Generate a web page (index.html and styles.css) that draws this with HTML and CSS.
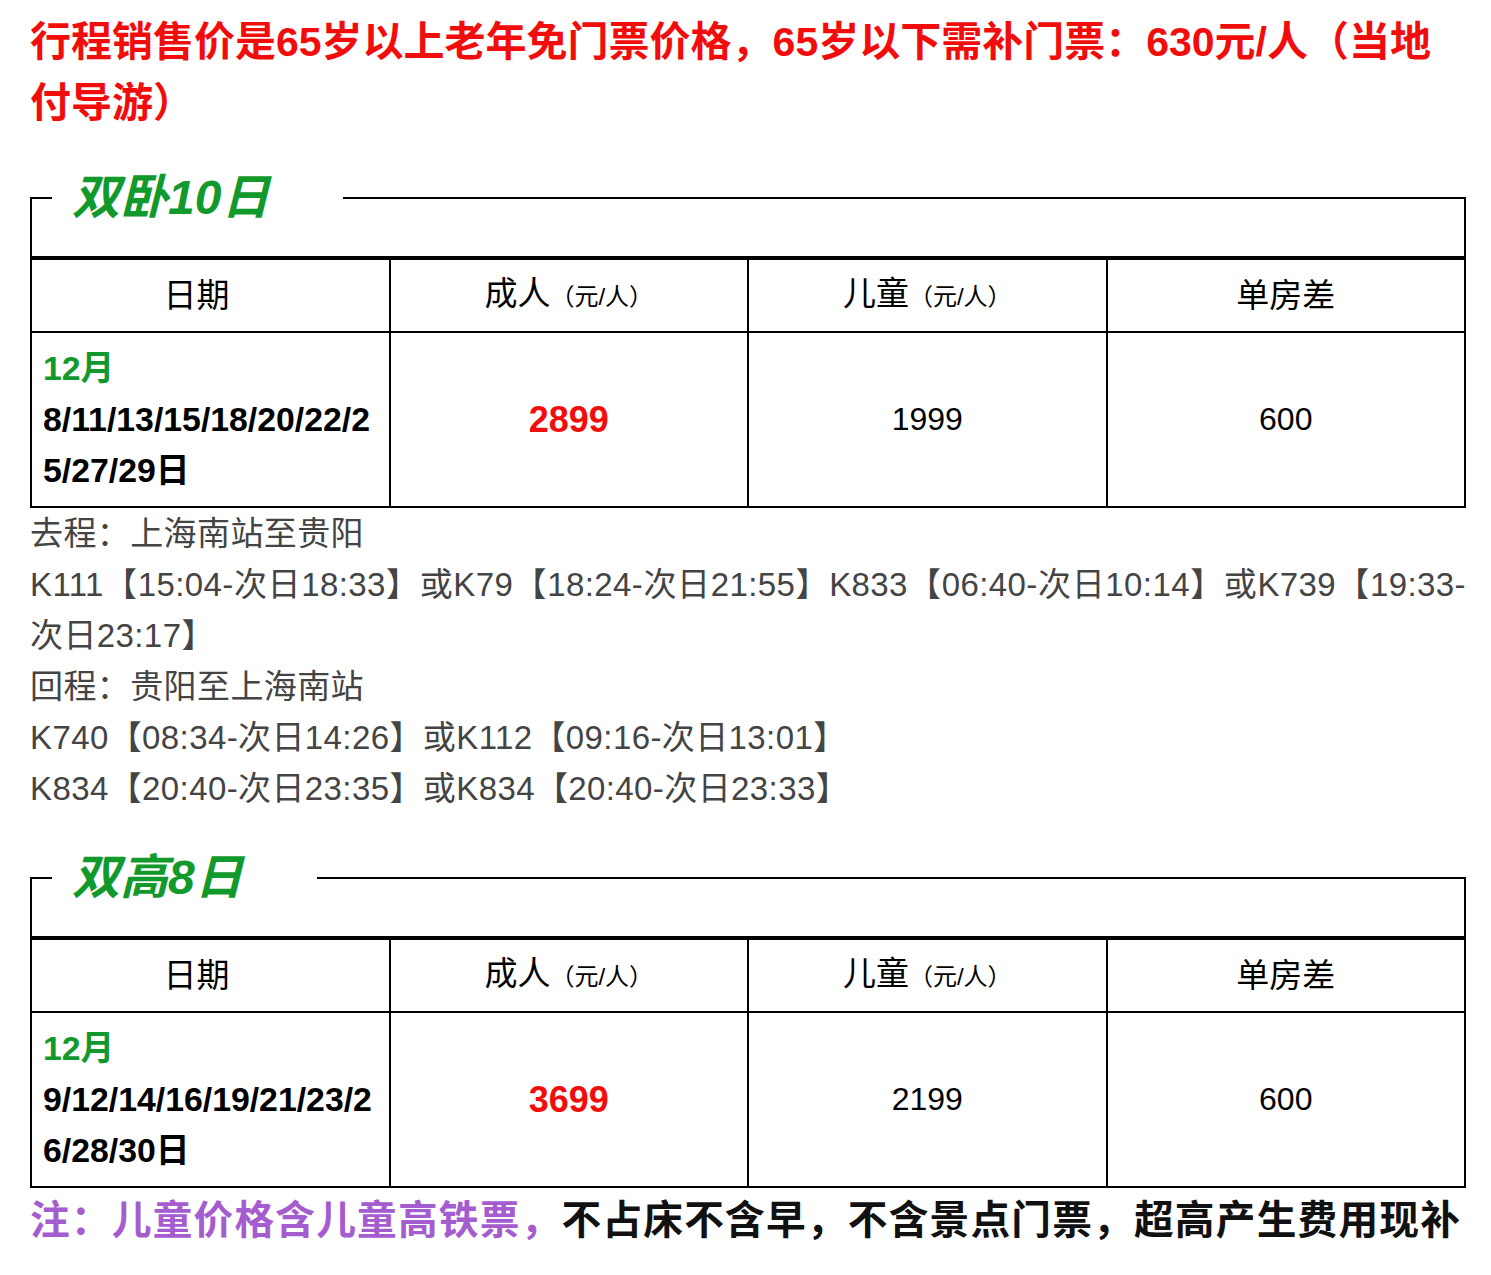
FILE: index.html
```html
<!DOCTYPE html>
<html lang="zh-CN">
<head>
<meta charset="utf-8">
<title>行程价格</title>
<link rel="stylesheet" href="styles.css">
</head>
<body>
<div class="page">
  <p class="notice">行程销售价是65岁以上老年免门票价格，65岁以下需补门票：630元/人（当地付导游）</p>

  <section class="section">
    <fieldset class="tour tour-long">
      <legend class="tour-title">双卧10日</legend>
      <div class="tour-spacer"></div>
    </fieldset>
    <table class="prices">
      <tr>
        <th>日期&nbsp;&nbsp;&nbsp;</th>
        <th>成人<span class="unit">（元/人）</span></th>
        <th>儿童<span class="unit">（元/人）</span></th>
        <th>单房差</th>
      </tr>
      <tr>
        <td class="dates"><span class="month">12月</span><br>8/11/13/15/18/20/22/25/27/29日</td>
        <td class="adult">2899</td>
        <td>1999</td>
        <td>600</td>
      </tr>
    </table>
    <div class="route">
      <p>去程：上海南站至贵阳</p>
      <p>K111【15:04-次日18:33】或K79【18:24-次日21:55】K833【06:40-次日10:14】或K739【19:33-<span class="keep">次日23:17】</span></p>
      <p>回程：贵阳至上海南站</p>
      <p>K740【08:34-次日14:26】或K112【09:16-次日13:01】</p>
      <p>K834【20:40-次日23:35】或K834【20:40-次日23:33】</p>
    </div>
  </section>

  <section class="section">
    <fieldset class="tour">
      <legend class="tour-title">双高8日</legend>
      <div class="tour-spacer"></div>
    </fieldset>
    <table class="prices">
      <tr>
        <th>日期&nbsp;&nbsp;&nbsp;</th>
        <th>成人<span class="unit">（元/人）</span></th>
        <th>儿童<span class="unit">（元/人）</span></th>
        <th>单房差</th>
      </tr>
      <tr>
        <td class="dates"><span class="month">12月</span><br>9/12/14/16/19/21/23/26/28/30日</td>
        <td class="adult">3699</td>
        <td>2199</td>
        <td>600</td>
      </tr>
    </table>
    <p class="note"><span class="note-kid">注：儿童价格含儿童高铁票，</span>不占床不含早，不含景点门票，超高产生费用现补</p>
  </section>
</div>
</body>
</html>
```

FILE: styles.css
```css
* { box-sizing: border-box; }

body {
  margin: 0;
  background: #fff;
  color: #000;
  font-family: "Liberation Sans", "Noto Sans CJK SC", sans-serif;
}

.page {
  width: 1436px;
  margin-left: 30px;
  padding-top: 12px;
}

.notice {
  margin: 0;
  font-size: 41px;
  line-height: 61px;
  font-weight: 700;
  color: #f20d0d;
}

.section {
  margin-top: 35px;
}

.tour {
  margin: 0;
  padding: 0 20px;
  border: 2px solid #000;
  min-width: 0;
}

.tour-title {
  padding: 0 74px 0 20px;
  font-size: 48px;
  line-height: 58px;
  font-style: italic;
  font-weight: 700;
  color: #12992c;
}

.tour-spacer {
  height: 29px;
}

.prices {
  width: 100%;
  border-collapse: collapse;
  table-layout: fixed;
}

.prices th,
.prices td {
  border: 2px solid #000;
}

.prices th {
  height: 73px;
  padding: 0;
  font-size: 33px;
  font-weight: 400;
  line-height: 40px;
  text-align: center;
}

.unit {
  font-size: 24px;
}

.prices td {
  padding: 10px 11px;
  font-size: 32px;
  line-height: 51px;
  text-align: center;
}

.prices td.dates {
  text-align: left;
  font-size: 33.8px;
  font-weight: 700;
  word-break: break-all;
}

.month {
  color: #12992c;
}

.prices td.adult {
  color: #f20d0d;
  font-weight: 700;
  font-size: 36px;
}

.route {
  font-size: 33px;
  line-height: 51px;
  letter-spacing: 0.4px;
  color: #444;
  text-align: justify;
}

.route p {
  margin: 0;
}

.keep {
  white-space: nowrap;
}

.note {
  margin: 0;
  font-size: 39.7px;
  line-height: 64px;
  letter-spacing: 1.2px;
  font-weight: 700;
  color: #111;
}

.note-kid {
  color: #a55ccf;
}
```
